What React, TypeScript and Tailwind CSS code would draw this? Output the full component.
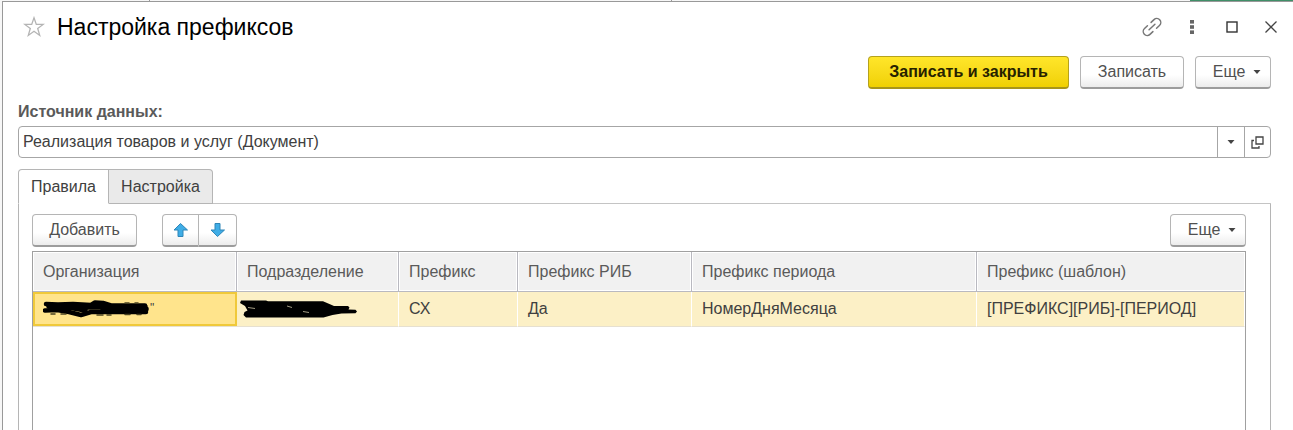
import React, {useState} from 'react'

const columns = [
    {title: 'Организация', width: 'w-[204px]'},
    {title: 'Подразделение', width: 'w-[162px]'},
    {title: 'Префикс', width: 'w-[119px]'},
    {title: 'Префикс РИБ', width: 'w-[174px]'},
    {title: 'Префикс периода', width: 'w-[285px]'},
    {title: 'Префикс (шаблон)', width: ''},
]

const buttonClass =
    'flex h-[33px] items-center justify-center rounded-[4px] border border-[#b5b5b5] border-b-2 border-b-[#9c9c9c] bg-linear-to-b from-white from-60% to-[#ececec] text-base text-[#505050]'

function Caret() {
    return (
        <svg width="8" height="4" viewBox="0 0 8 4" fill="#444">
            <path d="M0.5 0h7L4 4z"/>
        </svg>
    )
}

function MoreButton() {
    return (
        <button className={`${buttonClass} w-[76px] gap-2 pl-2`}>
            Еще
            <Caret/>
        </button>
    )
}

function Arrow({down}: { down?: boolean }) {
    return (
        <svg width="16" height="16" viewBox="0 0 16 16" fill="#3fade6" stroke="#2f86b8" strokeLinejoin="round">
            <path d={down ? 'M5 1.5h5V8h4.500L7.500 14.500 1 8h4z' : 'M5 14.500h5V8h4.500L7.500 1.500 1 8h4z'}/>
        </svg>
    )
}

function TitleBar() {
    return (
        <header className="flex h-[54px] items-center pr-[15px] pb-1 pl-5">
            <button aria-label="В избранное">
                <svg width="22" height="22" viewBox="0 0 22 22" fill="none" stroke="#b4b4b4" strokeWidth="1.3">
                    <path d="M11 1.8l2.3 6.6h6.9l-5.5 4.1 2 6.9L11 15.2l-5.700 4.2 2-6.9-5.500-4.1h6.9z"/>
                </svg>
            </button>
            <h1 className="ml-3 flex-1 text-[23px] text-black">Настройка префиксов</h1>
            <div className="flex items-center text-[#555]">
                <button aria-label="Получить ссылку" className="mr-7">
                    <svg width="20" height="20" viewBox="0 0 20 20" fill="none" stroke="#777" strokeWidth="1.5"
                         strokeLinecap="round">
                        <g transform="rotate(-43 10 10)">
                            <path d="M7.500 6H3.500a4 4 0 0 0 0 8h4"/>
                            <path d="M12.500 14h4a4 4 0 0 0 0-8h-4"/>
                            <path d="M6 10h8"/>
                        </g>
                    </svg>
                </button>
                <button aria-label="Меню" className="mr-8">
                    <svg width="4" height="14" viewBox="0 0 4 14" fill="#666">
                        <rect width="4" height="3.6" y="0"/>
                        <rect width="4" height="3.6" y="5.2"/>
                        <rect width="4" height="3.6" y="10.4"/>
                    </svg>
                </button>
                <button aria-label="Развернуть" className="mr-[26px]">
                    <svg width="12" height="12" viewBox="0 0 12 12" fill="none" stroke="#333" strokeWidth="1.4">
                        <rect x="1" y="1" width="10" height="10"/>
                    </svg>
                </button>
                <button aria-label="Закрыть">
                    <svg width="14" height="14" viewBox="0 0 14 14" stroke="#444" strokeWidth="1.3">
                        <path d="M1.5 1.5l11 11M12.5 1.5l-11 11"/>
                    </svg>
                </button>
            </div>
        </header>
    )
}

function SourceField() {
    return (
        <div className="mt-[13px]">
            <label htmlFor="source" className="block text-base leading-5 font-bold text-[#5a5a5a]">
                Источник данных:
            </label>
            <div className="mt-1 flex h-8 rounded-[4px] border border-[#a6a6a6]">
                <input id="source" defaultValue="Реализация товаров и услуг (Документ)"
                       className="min-w-0 flex-1 bg-transparent px-1 text-base text-[#404040] outline-none"/>
                <button aria-label="Выбрать из списка"
                        className="flex w-[27px] items-center justify-center border-l border-[#a6a6a6]">
                    <Caret/>
                </button>
                <button aria-label="Открыть"
                        className="flex w-[26px] items-center justify-center border-l border-[#a6a6a6]">
                    <svg width="13" height="13" viewBox="0 0 13 13" fill="none" stroke="#444" strokeWidth="1.3">
                        <path d="M5 1h7v7H5z"/>
                        <path d="M3 4.5H1V12h7v-2"/>
                    </svg>
                </button>
            </div>
        </div>
    )
}

function RulesTable() {
    return (
        <div className="mt-1 flex-1 border border-b-0 border-[#a0a0a0]">
            <table className="w-full table-fixed border-separate border-spacing-0 text-left text-base">
                <thead>
                <tr>
                    {columns.map(col => (
                        <th key={col.title}
                            className={`${col.width} h-10 border-r border-b border-[#b9b9c0] bg-[#f1f1f1] px-[10px] font-normal text-[#5a5a5a] inset-ring inset-ring-white last:border-r-0`}>
                            {col.title}
                        </th>
                    ))}
                </tr>
                </thead>
                <tbody>
                <tr className="text-[#404040] [&>td]:border-b [&>td]:border-b-[#e6e0d0] [&>td]:px-[10px] [&>td+td]:border-r [&>td+td]:border-r-white [&>td+td]:bg-[#fcf0c6]">
                    <td className="h-[35px] bg-[#ffe48c] inset-ring-2 inset-ring-[#f0c93a]">
                        <div className="flex items-center">
                            <svg width="107" height="18" viewBox="0 0 107 18" fill="none" stroke="#000"
                                 strokeLinecap="round" strokeLinejoin="round">
                                <path d="M3 4l12 .5 15-.5 18 1 4-2.500 8 .5 8 2.500h34" strokeWidth="4.500"/>
                                <path d="M2 10.500l12-.5 12 2 12 3 10-3h55" strokeWidth="4.500"/>
                                <path d="M6 6l18 5M20 6l22 4M38 7h64M60 9h43" strokeWidth="5.500"/>
                                <path d="M8 14h4M18 14h5M54 15h6M64 15h4M82 14.500h5M94 14.500h4M82 3h4M92 3h3"
                                      stroke="#4a4220" strokeWidth="1.5"/>
                            </svg>
                            <span className="self-start text-xs leading-4">"</span>
                        </div>
                    </td>
                    <td>
                        <svg width="119" height="18" viewBox="0 0 119 18" fill="#000" className="-ml-2">
                            <path
                                d="M2 .5h25l2 .8h55l7 3 4 1.700h14l1.500 1.500-1 2 7 .2 1.500 1.800-1.500 1.800-14 .2-9 1.500-9 2.500H7L4.500 15l1-3 3-1.500L6 6 1 3z"/>
                            <path d="M9 7.500l7 1M48 6l5 1.500M64 11.500l6 1" stroke="#cbc3a5" strokeWidth=".8"/>
                        </svg>
                    </td>
                    <td>СХ</td>
                    <td>Да</td>
                    <td>НомерДняМесяца</td>
                    <td>[ПРЕФИКС][РИБ]-[ПЕРИОД]</td>
                </tr>
                </tbody>
            </table>
        </div>
    )
}

export default function App() {
    const [tab, setTab] = useState('rules')

    const tabClass = (name: string) =>
        tab === name
            ? 'border-b-white bg-white'
            : 'border-b-[#b5b5b5] bg-[#eaeaea]'

    return (
        <div className="flex min-h-screen flex-col bg-[#f7f7f7] pl-[2px] font-['Liberation_Sans',Arial,sans-serif]">
            <div className="flex h-px">
                <div className="w-[148px] border-r border-[#999]"/>
                <div className="w-[522px] border-r border-[#999]"/>
                <div className="flex-1"/>
                <div className="w-[103px] bg-[#3f8f68]"/>
            </div>
            <main className="flex flex-1 flex-col border-t border-l border-[#999] bg-white">
                <TitleBar/>
                <div className="flex flex-1 flex-col pr-[22px] pl-[15px]">
                    <div className="flex justify-end gap-[11px]">
                        <button
                            className="flex h-[33px] w-[201px] items-center justify-center rounded-[4px] border border-b-2 border-[#b5a21c] border-b-[#a8951a] bg-linear-to-b from-[#ffe629] to-[#f0d000] text-base font-bold text-[#262200]">
                            Записать и закрыть
                        </button>
                        <button className={`${buttonClass} w-[104px]`}>Записать</button>
                        <MoreButton/>
                    </div>

                    <SourceField/>

                    <div role="tablist" className="mt-[11px] flex h-[35px] text-base text-[#404040]">
                        <button role="tab" aria-selected={tab === 'rules'} onClick={() => setTab('rules')}
                                className={`${tabClass('rules')} w-[91px] rounded-tl-[4px] border border-[#b5b5b5]`}>
                            Правила
                        </button>
                        <button role="tab" aria-selected={tab === 'settings'} onClick={() => setTab('settings')}
                                className={`${tabClass('settings')} w-[104px] rounded-tr-[4px] border border-l-0 border-[#b5b5b5]`}>
                            Настройка
                        </button>
                        <div className="flex-1 border-b border-[#c4c4c4]"/>
                    </div>

                    <div className="flex flex-1 flex-col border-x border-[#b5b5b5] pt-[10px] pr-6 pl-[13px]">
                        <div className="flex">
                            <button className={`${buttonClass} w-[105px]`}>Добавить</button>
                            <div className="ml-[25px] flex">
                                <button aria-label="Переместить вверх" className={`${buttonClass} w-[37px] rounded-r-none`}>
                                    <Arrow/>
                                </button>
                                <button aria-label="Переместить вниз"
                                        className={`${buttonClass} w-[38px] rounded-l-none border-l-0`}>
                                    <Arrow down/>
                                </button>
                            </div>
                            <div className="ml-auto">
                                <MoreButton/>
                            </div>
                        </div>
                        <RulesTable/>
                    </div>
                </div>
            </main>
        </div>
    )
}
